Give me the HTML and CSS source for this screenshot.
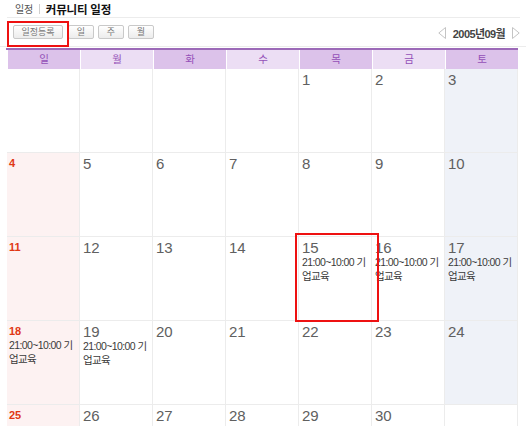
FILE: index.html
```html
<!DOCTYPE html>
<html lang="ko">
<head>
<meta charset="utf-8">
<title>커뮤니티 일정</title>
<link rel="stylesheet" href="styles.css">
</head>
<body>
<div class="page">
  <div class="title">
    <span class="crumb">일정</span>
    <span class="sep"></span>
    <span class="name">커뮤니티 일정</span>
  </div>
  <div class="toolbar">
    <div class="buttons">
      <button class="btn btn-wide">일정등록</button>
      <button class="btn">일</button>
      <button class="btn">주</button>
      <button class="btn">월</button>
    </div>
    <div class="month-nav">
      <svg class="arrow" width="8" height="12" viewBox="0 0 8 12"><path d="M7.5 0.5 L0.8 6 L7.5 11.5 Z" fill="#fff" stroke="#c4c4c4" stroke-width="1"/></svg>
      <span class="month">2005년09월</span>
      <svg class="arrow" width="8" height="12" viewBox="0 0 8 12"><path d="M0.5 0.5 L7.2 6 L0.5 11.5 Z" fill="#fff" stroke="#c4c4c4" stroke-width="1"/></svg>
    </div>
  </div>
  <div class="calendar">
    <div class="week-head">
      <div class="wd dark">일</div>
      <div class="wd light">월</div>
      <div class="wd dark">화</div>
      <div class="wd light">수</div>
      <div class="wd dark">목</div>
      <div class="wd light">금</div>
      <div class="wd dark">토</div>
    </div>
    <div class="grid">
      <div class="cell"></div>
      <div class="cell"></div>
      <div class="cell"></div>
      <div class="cell"></div>
      <div class="cell"><span class="num">1</span></div>
      <div class="cell"><span class="num">2</span></div>
      <div class="cell sat"><span class="num">3</span></div>

      <div class="cell sun"><span class="num">4</span></div>
      <div class="cell"><span class="num">5</span></div>
      <div class="cell"><span class="num">6</span></div>
      <div class="cell"><span class="num">7</span></div>
      <div class="cell"><span class="num">8</span></div>
      <div class="cell"><span class="num">9</span></div>
      <div class="cell sat"><span class="num">10</span></div>

      <div class="cell sun"><span class="num">11</span></div>
      <div class="cell"><span class="num">12</span></div>
      <div class="cell"><span class="num">13</span></div>
      <div class="cell"><span class="num">14</span></div>
      <div class="cell"><span class="num">15</span><p class="event">21:00~10:00 기<br>업교육</p></div>
      <div class="cell"><span class="num">16</span><p class="event">21:00~10:00 기<br>업교육</p></div>
      <div class="cell sat"><span class="num">17</span><p class="event">21:00~10:00 기<br>업교육</p></div>

      <div class="cell sun"><span class="num">18</span><p class="event">21:00~10:00 기<br>업교육</p></div>
      <div class="cell"><span class="num">19</span><p class="event">21:00~10:00 기<br>업교육</p></div>
      <div class="cell"><span class="num">20</span></div>
      <div class="cell"><span class="num">21</span></div>
      <div class="cell"><span class="num">22</span></div>
      <div class="cell"><span class="num">23</span></div>
      <div class="cell sat"><span class="num">24</span></div>

      <div class="cell sun"><span class="num">25</span></div>
      <div class="cell"><span class="num">26</span></div>
      <div class="cell"><span class="num">27</span></div>
      <div class="cell"><span class="num">28</span></div>
      <div class="cell"><span class="num">29</span></div>
      <div class="cell"><span class="num">30</span></div>
      <div class="cell"></div>
    </div>
  </div>
  <div class="mark mark-btn"></div>
  <div class="mark mark-cell"></div>
</div>
</body>
</html>
```

FILE: styles.css
```css
* { box-sizing: border-box; }
html, body { margin: 0; padding: 0; background: #fff; }
body {
  font-family: "Liberation Sans", "Noto Sans CJK KR", sans-serif;
  color: #333;
}
.page {
  position: relative;
  width: 531px;
}
.title {
  display: flex;
  align-items: center;
  height: 18px;
  margin-left: 7px;
  width: 513px;
  padding-left: 8px;
  border-bottom: 1px solid #ececec;
}
.crumb {
  font-size: 10px;
  color: #555;
  letter-spacing: -0.3px;
}
.sep {
  width: 1px;
  height: 10px;
  background: #cfcfcf;
  margin: 0 6px 0 6px;
}
.name {
  font-size: 11.5px;
  font-weight: bold;
  color: #111;
  letter-spacing: -0.2px;
}
.toolbar {
  display: flex;
  align-items: center;
  justify-content: space-between;
  height: 29px;
  width: 526px;
  padding: 0 6px 0 13px;
  border-bottom: 1px solid #ececec;
}
.buttons {
  display: flex;
  gap: 4px;
  margin-top: -1px;
}
.btn {
  height: 14px;
  width: 26px;
  padding: 0;
  border: 1px solid #c9c9c9;
  border-radius: 2px;
  background: linear-gradient(#ffffff, #ececec);
  font-family: "Noto Sans CJK KR", sans-serif;
  font-size: 9px;
  line-height: 12px;
  color: #777;
}
.btn-wide { width: 50px; margin-right: 1px; }
.month-nav {
  display: flex;
  align-items: center;
  gap: 7px;
  margin-top: 1px;
}
.arrow { display: block; }
.month {
  font-size: 11px;
  font-weight: bold;
  color: #444;
  letter-spacing: -0.6px;
}
.calendar {
  margin-left: 6px;
  width: 512px;
  margin-top: 1px;
  border-top: 2px solid #9c6ab8;
}
.week-head {
  display: grid;
  grid-template-columns: 1px repeat(7, 72px);
  column-gap: 1px;
  height: 19px;
}
.week-head::before { content: ""; }
.wd {
  font-family: "Noto Sans CJK KR", sans-serif;
  font-size: 10.5px;
  line-height: 18px;
  text-align: center;
  color: #9450b8;
}
.wd.dark { background: #dcc2ea; }
.wd.light { background: #ecdef4; }
.grid {
  display: grid;
  grid-template-columns: repeat(7, 72px);
  grid-auto-rows: 83px;
  gap: 1px;
  margin-left: 1px;
  width: 511px;
  background: #ececec;
  border-bottom: 1px solid #ececec;
}
.cell {
  background: #fff;
  padding: 2px 2px 0 3px;
}
.cell.sun { background: #fdf2f2; padding-left: 2px; }
.cell.sat { background: #eff2f8; }
.num {
  display: block;
  font-size: 15px;
  line-height: 17px;
  color: #606060;
}
.sun .num {
  font-size: 11px;
  font-weight: bold;
  line-height: 14px;
  color: #e03814;
  padding-top: 1px;
}
.event {
  margin: -1px 0 0;
  font-size: 10.5px;
  line-height: 14px;
  color: #3a3a3a;
  letter-spacing: -0.6px;
}
.sun .event { margin-top: 0; }
.mark {
  position: absolute;
  border: 2px solid #ee1111;
}
.mark-btn { left: 7px; top: 21px; width: 62px; height: 26px; }
.mark-cell { left: 295px; top: 233px; width: 84px; height: 89px; }
```
